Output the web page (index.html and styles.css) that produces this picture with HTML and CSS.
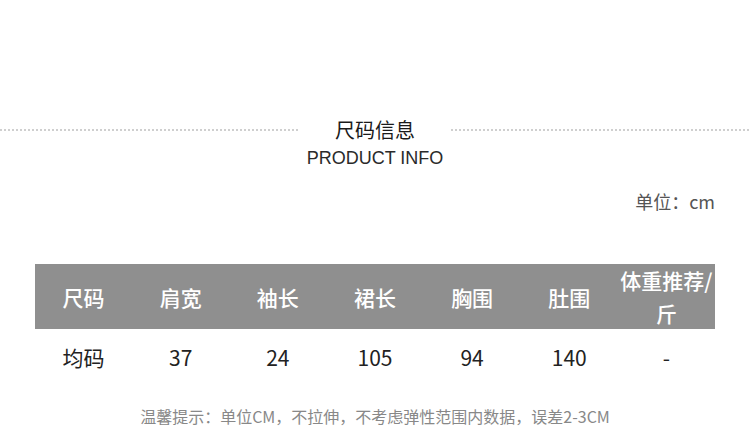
FILE: index.html
```html
<!DOCTYPE html>
<html lang="zh">
<head>
<meta charset="utf-8">
<link rel="stylesheet" href="styles.css">
</head>
<body>
<div class="page">
  <div class="heading">
    <div class="dots"></div>
    <div class="title">尺码信息</div>
    <div class="dots"></div>
  </div>
  <div class="subtitle">PRODUCT INFO</div>
  <div class="wrap">
    <div class="unit">单位：cm</div>
    <div class="table">
      <div class="row head">
        <div class="cell">尺码</div>
        <div class="cell">肩宽</div>
        <div class="cell">袖长</div>
        <div class="cell">裙长</div>
        <div class="cell">胸围</div>
        <div class="cell">肚围</div>
        <div class="cell two">体重推荐/<br>斤</div>
      </div>
      <div class="row body">
        <div class="cell">均码</div>
        <div class="cell">37</div>
        <div class="cell">24</div>
        <div class="cell">105</div>
        <div class="cell">94</div>
        <div class="cell">140</div>
        <div class="cell">-</div>
      </div>
    </div>
    <div class="note">温馨提示：单位CM，不拉伸，不考虑弹性范围内数据，误差2-3CM</div>
  </div>
</div>
</body>
</html>
```
FILE: styles.css
```css
html, body {
  margin: 0;
  padding: 0;
  background: #fff;
}
.page {
  width: 750px;
  height: 429px;
  overflow: hidden;
  font-family: "Noto Sans CJK SC", "Noto Sans", sans-serif;
  padding-top: 117px;
  box-sizing: border-box;
}
.heading {
  display: flex;
  align-items: center;
  height: 26px;
}
.dots {
  flex: 1;
  height: 2px;
  background-image: linear-gradient(to right, #cfcfcf 50%, transparent 50%);
  background-size: 4px 2px;
  background-repeat: repeat-x;
}
.title {
  width: 152px;
  text-align: center;
  font-size: 20px;
  line-height: 26px;
  color: #1a1a1a;
}
.subtitle {
  margin-top: 3px;
  text-align: center;
  font-family: "Liberation Sans", sans-serif;
  font-size: 18px;
  line-height: 24px;
  color: #2a2a2a;
}
.wrap {
  padding: 0 35px;
}
.unit {
  margin-top: 19px;
  text-align: right;
  font-size: 18px;
  line-height: 24px;
  color: #555;
}
.table {
  margin-top: 51px;
}
.row {
  display: grid;
  grid-template-columns: repeat(7, 1fr);
  align-items: center;
  text-align: center;
}
.head {
  background: #8f8f8f;
  height: 65px;
  color: #fff;
  font-size: 21px;
  font-weight: 500;
}
.head .two {
  line-height: 33px;
}
.body {
  height: 56px;
  font-size: 21px;
  color: #222;
}
.note {
  margin-top: 20px;
  text-align: center;
  font-size: 16px;
  line-height: 22px;
  color: #888;
}
```
